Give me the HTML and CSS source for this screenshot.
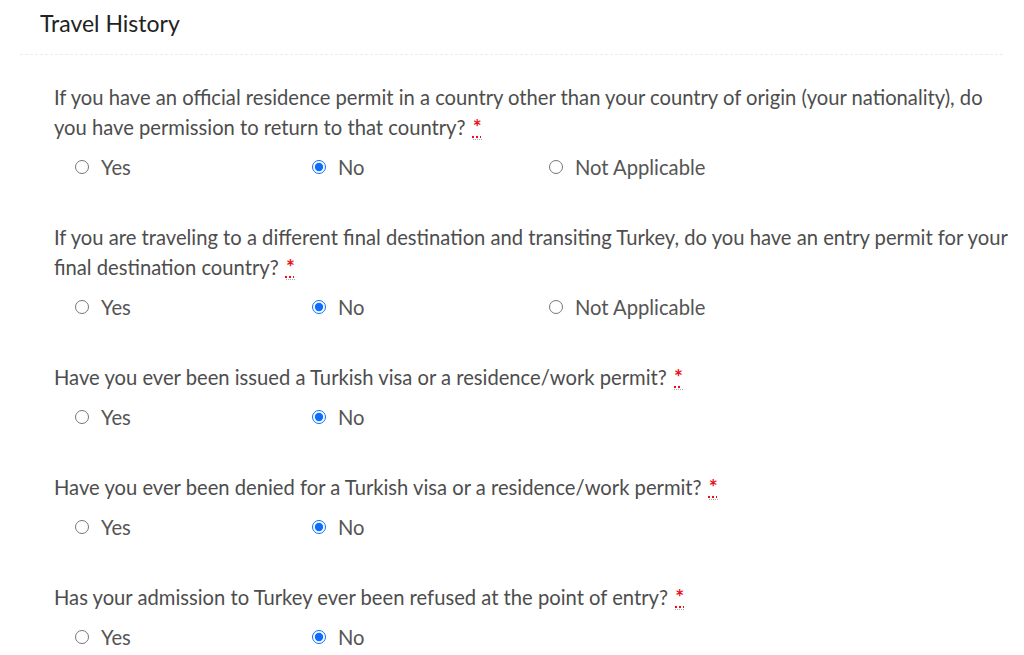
FILE: index.html
```html
<!DOCTYPE html>
<html>
<head>
<meta charset="utf-8">
<link rel="stylesheet" href="styles.css">
</head>
<body>
<div class="page">
  <div class="section-head"><h2>Travel History</h2></div>
  <div class="questions">
    <div class="q">
      <p class="q-text">If you have an official residence permit in a country other than your country of origin (your nationality), do you have permission to return to that country? <abbr class="req" title="required">*</abbr></p>
      <div class="opts">
        <label class="opt"><input type="radio" name="q1"><span>Yes</span></label>
        <label class="opt"><input type="radio" name="q1" checked><span>No</span></label>
        <label class="opt"><input type="radio" name="q1"><span>Not Applicable</span></label>
      </div>
    </div>
    <div class="q">
      <p class="q-text">If you are traveling to a different final destination and transiting Turkey, do you have an entry permit for your final destination country? <abbr class="req" title="required">*</abbr></p>
      <div class="opts">
        <label class="opt"><input type="radio" name="q2"><span>Yes</span></label>
        <label class="opt"><input type="radio" name="q2" checked><span>No</span></label>
        <label class="opt"><input type="radio" name="q2"><span>Not Applicable</span></label>
      </div>
    </div>
    <div class="q">
      <p class="q-text">Have you ever been issued a Turkish visa or a residence/work permit? <abbr class="req" title="required">*</abbr></p>
      <div class="opts">
        <label class="opt"><input type="radio" name="q3"><span>Yes</span></label>
        <label class="opt"><input type="radio" name="q3" checked><span>No</span></label>
      </div>
    </div>
    <div class="q">
      <p class="q-text">Have you ever been denied for a Turkish visa or a residence/work permit? <abbr class="req" title="required">*</abbr></p>
      <div class="opts">
        <label class="opt"><input type="radio" name="q4"><span>Yes</span></label>
        <label class="opt"><input type="radio" name="q4" checked><span>No</span></label>
      </div>
    </div>
    <div class="q">
      <p class="q-text">Has your admission to Turkey ever been refused at the point of entry? <abbr class="req" title="required">*</abbr></p>
      <div class="opts">
        <label class="opt"><input type="radio" name="q5"><span>Yes</span></label>
        <label class="opt"><input type="radio" name="q5" checked><span>No</span></label>
      </div>
    </div>
  </div>
</div>
</body>
</html>
```

FILE: styles.css
```css
html, body {
  margin: 0;
  padding: 0;
  background: #fff;
}
body {
  font-family: Lato, "Liberation Sans", sans-serif;
  color: #444;
}
.page {
  padding: 0 21px 0 20px;
}
.section-head {
  border-bottom: 1px dashed #ececec;
  padding: 7px 20px 15px;
}
.section-head h2 {
  margin: 0;
  font-size: 23px;
  font-weight: 400;
  line-height: 32px;
  color: #222;
}
.questions {
  padding: 26.5px 0 0 34px;
  margin-right: -12px;
}
.q {
  margin-bottom: 40px;
}
.q:last-child {
  margin-bottom: 0;
}
.q-text {
  margin: 0;
  font-size: 20.2px;
  line-height: 30px;
  color: #4d4d4d;
}
.req {
  margin-left: 2px;
  line-height: 1;
  color: #e8101c;
  text-decoration: underline dotted #e8101c;
  text-underline-offset: 2px;
  border-bottom: 1px dotted #aaa;
  cursor: help;
  font-size: 21px;
  font-weight: 700;
}
.opts {
  display: flex;
  margin-top: 10px;
  padding-left: 20px;
}
.opt {
  width: 237px;
  display: flex;
  align-items: center;
  gap: 12px;
  font-size: 20.2px;
  line-height: 30px;
  color: #555;
}
.opt input {
  margin: 0 0 0 1px;
  width: 14px;
  height: 14px;
  accent-color: #0d6efd;
}
```
